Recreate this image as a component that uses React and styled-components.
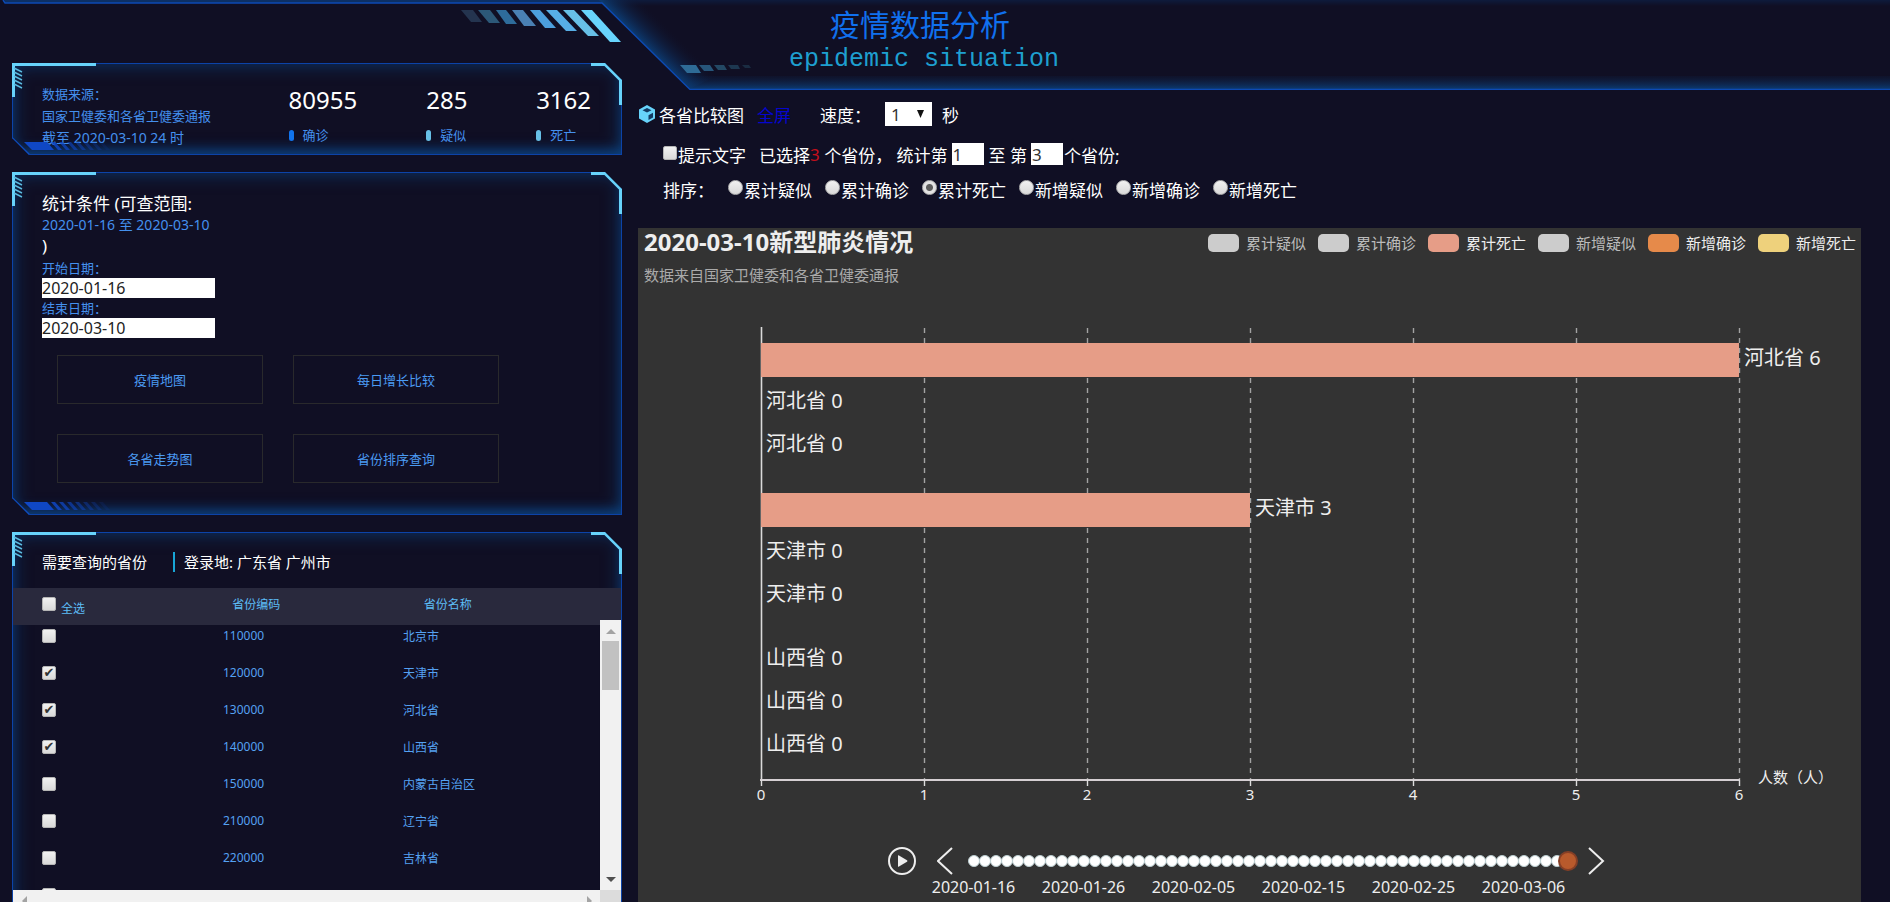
import React, { useState } from "react";
import styled, { createGlobalStyle, css } from "styled-components";

const GlobalStyle = createGlobalStyle`
  * { box-sizing: border-box; }
  body {
    margin: 0;
    background: #100f24;
    color: #fff;
    font-family: "Noto Sans", "Noto Sans CJK SC", sans-serif;
  }
  button, input, select { font-family: inherit; }
`;

const Page = styled.div`
  position: relative;
  display: grid;
  grid-template-columns: minmax(0, 319fr) minmax(0, 626fr);
  height: 100vh;
  overflow: hidden;
`;

const Backdrop = styled.svg`
  position: absolute;
  top: 0;
  left: 0;
  width: 100%;
  height: 90px;
  pointer-events: none;
`;

const Side = styled.aside`
  display: flex;
  flex-direction: column;
  gap: 17px;
  padding: 63px 16px 0 12px;
`;

/* ---------- framed panel ---------- */

const PanelBox = styled.section`
  position: relative;
  flex: none;
  border: 1px solid #0c43a8;
  box-shadow: inset 0 0 18px rgba(10, 82, 150, 0.65), inset 0 -8px 12px -4px rgba(12, 75, 150, 0.6);
  clip-path: polygon(0 0, calc(100% - 17px) 0, 100% 17px, 100% 100%, 17px 100%, 0 calc(100% - 17px));
  padding: ${(p) => p.$pad || "20px 0"};
  min-height: ${(p) => p.$min || "0"};
`;

const Corner = styled.svg`
  position: absolute;
  pointer-events: none;
  ${(p) => p.$at === "tl" && css`top: -1px; left: -1px;`}
  ${(p) => p.$at === "tr" && css`top: -1px; right: -1px;`}
  ${(p) => p.$at === "bl" && css`bottom: -1px; left: -1px;`}
`;

function Panel({ pad, min, children }) {
  return (
    <PanelBox $pad={pad} $min={min}>
      <Corner $at="tl" width="84" height="34" aria-hidden="true">
        <path d="M0 0H84V3H3V34H0Z" fill="#67d3fb" />
        <g stroke="#5bbbe0" strokeWidth="1.5">
          {[5, 9, 13, 17, 21].map((y) => (
            <path key={y} d={`M2 ${y}L10 ${y + 4}`} />
          ))}
        </g>
      </Corner>
      <Corner $at="tr" width="32" height="42" aria-hidden="true">
        <path d="M1 1.5H15L30.5 17V42" fill="none" stroke="#67d3fb" strokeWidth="3" />
      </Corner>
      <Corner $at="bl" width="110" height="18" aria-hidden="true">
        <path d="M0 1L17 17.5" stroke="#0f4cc0" strokeWidth="2" />
        <path d="M12 5H35L42 13H20Z" fill="#0f47c4" />
        {[0, 1, 2, 3, 4, 5, 6].map((i) => (
          <path
            key={i}
            d={`M${39 + i * 8} 5h4l7 8h-4z`}
            fill="#0f47c4"
            opacity={0.85 - i * 0.12}
          />
        ))}
      </Corner>
      {children}
    </PanelBox>
  );
}

/* ---------- totals ---------- */

const Totals = styled.div`
  display: grid;
  grid-template-columns: 247fr 138fr 110fr 85fr;
  padding-left: 29px;
`;

const Source = styled.p`
  margin: 0;
  font-size: 13px;
  line-height: 22px;
  color: #4490ee;
`;

const Until = styled.span`
  display: block;
  font-size: 14px;
`;

const Total = styled.div`
  display: flex;
  flex-direction: column;
`;

const TotalNumber = styled.strong`
  font-size: 24px;
  font-weight: 400;
  line-height: 34px;
`;

const TotalName = styled.span`
  display: flex;
  align-items: center;
  gap: 9px;
  margin-top: 8px;
  font-size: 13px;
  line-height: 20px;
  color: #4490ee;

  &::before {
    content: "";
    width: 5px;
    height: 11px;
    border-radius: 3px;
    background: ${(p) => p.$mark};
  }
`;

/* ---------- query conditions ---------- */

const Conditions = styled.form`
  display: flex;
  flex-direction: column;
  align-items: flex-start;
  padding: 0 29px;
`;

const ConditionText = styled.span`
  font-size: 17px;
  line-height: 24px;
`;

const DateRange = styled.span`
  font-size: 14px;
  line-height: 18px;
  color: #4490ee;
`;

const DateLabel = styled.label`
  font-size: 13px;
  line-height: 20px;
  color: #4490ee;
`;

const DateInput = styled.input`
  width: 173px;
  height: 20px;
  padding: 0;
  border: 0;
  background: #fff;
  color: #222;
  font-size: 16px;
`;

const QueryButtons = styled.div`
  display: grid;
  grid-template-columns: repeat(2, 206px);
  grid-auto-rows: 49px;
  gap: 30px;
  margin: 17px 0 0 15px;
`;

const QueryButton = styled.button`
  border: 1px solid #29292c;
  background: transparent;
  color: #4b9af2;
  font-size: 13px;
`;

/* ---------- provinces ---------- */

const ListHeading = styled.header`
  display: flex;
  padding: 0 29px 16px;
  font-size: 15px;
  line-height: 20px;
`;

const HeadingText = styled.span`
  & + & {
    margin-left: 26px;
    padding-left: 9px;
    border-left: 2px solid #18a5d6;
  }
`;

const Table = styled.table`
  width: 100%;
  table-layout: fixed;
  border-collapse: collapse;
  font-size: 12px;
`;

const HeadRow = styled.tr`
  height: 37px;
  background: #29293d;
  color: #5dbdf6;
`;

const HeadCell = styled.th`
  width: ${(p) => p.$w};
  padding: 0 0 5px ${(p) => (p.$first ? "29px" : "0")};
  font-weight: 400;
  text-align: ${(p) => (p.$first ? "left" : "center")};
`;

const SelectAll = styled.label`
  display: flex;
  align-items: center;
  gap: 5px;

  span { padding-top: 7px; }
`;

const Row = styled.tr`
  height: 37px;
  color: #55a1f2;
`;

const Cell = styled.td`
  width: ${(p) => p.$w};
  padding: 0 0 6px ${(p) => (p.$first ? "29px" : "0")};
`;

const ListArea = styled.div`
  display: grid;
  grid-template-columns: minmax(0, 1fr) 21px;
  grid-template-rows: 270px 21px;
  margin-top: -5px;
`;

const ListView = styled.div`
  overflow: hidden;
`;

const ScrollBar = styled.div`
  display: flex;
  flex-direction: ${(p) => (p.$across ? "row" : "column")};
  align-items: center;
  background: #f1f1f1;
`;

const ScrollArrow = styled.button`
  display: grid;
  place-items: center;
  flex: none;
  width: 21px;
  height: 21px;
  padding: 0;
  border: 0;
  background: transparent;
  margin-top: ${(p) => (p.$end ? "auto" : "0")};
  margin-left: ${(p) => (p.$far ? "auto" : "0")};
`;

const ScrollThumb = styled.div`
  width: 17px;
  height: 49px;
  background: #c1c1c1;
`;

const ScrollCorner = styled.div`
  background: #dcdcdc;
`;

const boxLook = css`
  appearance: none;
  flex: none;
  width: 14px;
  height: 14px;
  margin: 0;
  border: 1px solid #b5b5b5;
  background: linear-gradient(#f1f1f1, #d9d9d9);
`;

const Check = styled.input.attrs({ type: "checkbox" })`
  ${boxLook}
  display: block;
  border-radius: 2px;
  position: relative;

  &:checked::after {
    content: "✔";
    position: absolute;
    inset: 0;
    color: #333;
    font: 13px/12px "DejaVu Sans", sans-serif;
    text-align: center;
  }
`;

const Radio = styled.input.attrs({ type: "radio" })`
  ${boxLook}
  width: 15px;
  height: 15px;
  border-radius: 50%;

  &:checked {
    background: radial-gradient(circle, #5c5c5c 0 3px, #e2e2e2 4px);
  }
`;

/* ---------- main column ---------- */

const Main = styled.main`
  display: flex;
  flex-direction: column;
  padding-right: 29px;
`;

const Title = styled.header`
  display: flex;
  flex-direction: column;
  align-items: center;
  align-self: flex-start;
  height: 90px;
  padding-top: 6px;
  margin-left: 151px;
`;

const TitleText = styled.h1`
  margin: 0 8px 4px 0;
  font-family: "Noto Sans CJK SC", sans-serif;
  font-size: 30px;
  font-weight: 400;
  line-height: 34px;
  color: #1070ee;
`;

const Subtitle = styled.p`
  margin: 0;
  font-family: "Liberation Mono", monospace;
  font-size: 25px;
  line-height: 32px;
  color: #1e9fd0;
`;

const Controls = styled.form`
  display: flex;
  flex-direction: column;
  padding: 12px 0 27px;
  font-size: 17px;
  white-space: pre;
`;

const ControlRow = styled.div`
  display: flex;
  align-items: center;
  height: 24px;
  margin-bottom: ${(p) => p.$after || "0"};
  padding-left: ${(p) => (p.$indent ? "25px" : "1px")};
`;

const ChartName = styled.span`
  margin: 0 13px 0 4px;
`;

const FullScreen = styled.a`
  margin-right: 29px;
  color: #0505cf;
  text-decoration: none;
`;

const SpeedField = styled.label`
  display: flex;
  align-items: center;
  gap: 14px;
`;

const SpeedBox = styled.span`
  position: relative;
  display: flex;

  svg {
    position: absolute;
    top: 8px;
    right: 8px;
    pointer-events: none;
  }
`;

const SpeedSelect = styled.select`
  appearance: none;
  width: 47px;
  height: 24px;
  padding: 0 0 0 6px;
  border: 0;
  background: #fff;
  color: #333;
  font-size: 17px;
`;

const Unit = styled.span`
  margin-left: 10px;
`;

const Option = styled.label`
  display: flex;
  align-items: center;
  gap: 1px;
  margin-right: 13px;

  input { margin-bottom: 3px; }
`;

const Count = styled.span`
  color: #c4101c;
`;

const NumberInput = styled.input`
  width: 32px;
  height: 22px;
  margin: 0 ${(p) => (p.$tight ? "1px" : "5px")} 0 4px;
  padding: 0 0 0 1px;
  border: 0;
  background: #fff;
  color: #333;
  font-size: 17px;
`;

const SortName = styled.span`
  width: 65px;
`;

/* ---------- chart ---------- */

const Chart = styled.section`
  flex: 1 0 auto;
  background: #333;
`;

const ChartHead = styled.header`
  display: flex;
  justify-content: space-between;
  height: 99px;
  padding: 0 5px 0 6px;
`;

const ChartTitle = styled.h2`
  margin: 0;
  font-size: 24px;
  line-height: 28px;
  color: #eee;
`;

const ChartNote = styled.p`
  margin: 8px 0 0;
  font-size: 15px;
  line-height: 22px;
  color: #aaa;
`;

const Legend = styled.div`
  display: flex;
  gap: 12px;
  height: 29px;
  align-items: center;
`;

const LegendItem = styled.button`
  display: flex;
  align-items: center;
  gap: 7px;
  padding: 0;
  border: 0;
  background: none;
  font-size: 15px;
  line-height: 20px;
  white-space: nowrap;
  color: ${(p) => (p.$on ? "#eee" : "#bbb")};

  &::before {
    content: "";
    width: 31px;
    height: 18px;
    border-radius: 5px;
    background: ${(p) => p.$color};
  }
`;

const Plot = styled.svg`
  display: block;
  width: 100%;
`;

const Timeline = styled.div`
  display: flex;
  justify-content: center;
  align-items: flex-start;
  padding: 0 6px 16px 0;
`;

const TimelineButton = styled.button`
  display: flex;
  margin-right: ${(p) => p.$after || "0"};
  padding: 0;
  border: 0;
  background: none;
`;

const Track = styled.div`
  position: relative;
  width: 606px;
  height: 52px;
`;

const Dots = styled.div`
  display: flex;
  align-items: center;
  height: 28px;
`;

const Dot = styled.span`
  flex: none;
  width: 12px;
  height: 12px;
  margin-right: -1px;
  border: 1px solid #bccfd2;
  border-radius: 50%;
  background: #fff;
`;

const Slider = styled.input.attrs({ type: "range" })`
  appearance: none;
  position: absolute;
  top: 0;
  left: -4px;
  width: calc(100% + 8px);
  height: 28px;
  margin: 0;
  background: transparent;

  &::-webkit-slider-thumb {
    appearance: none;
    width: 20px;
    height: 20px;
    border: 2px solid #853f26;
    border-radius: 50%;
    background: #b85a2c;
  }
`;

const Dates = styled.div`
  display: flex;
  margin-left: -49px;
  font-size: 16px;
  line-height: 24px;
  color: #eee;

  span {
    flex: none;
    width: 110px;
    text-align: center;
  }
`;

const PROVINCES = [
  ["110000", "北京市", false],
  ["120000", "天津市", true],
  ["130000", "河北省", true],
  ["140000", "山西省", true],
  ["150000", "内蒙古自治区", false],
  ["210000", "辽宁省", false],
  ["220000", "吉林省", false],
  ["", "", false],
];

const SORTS = ["累计疑似", "累计确诊", "累计死亡", "新增疑似", "新增确诊", "新增死亡"];

const SERIES = [
  ["累计疑似", "#ccc", false],
  ["累计确诊", "#ccc", false],
  ["累计死亡", "#e69d87", true],
  ["新增疑似", "#ccc", false],
  ["新增确诊", "#e68a4a", true],
  ["新增死亡", "#eed17c", true],
];

const GROUPS = [
  ["河北省", [6, 0, 0]],
  ["天津市", [3, 0, 0]],
  ["山西省", [0, 0, 0]],
];

const DATES = ["2020-01-16", "2020-01-26", "2020-02-05", "2020-02-15", "2020-02-25", "2020-03-06"];

const LEFT = 123;
const STEP = 163;
const BASE = 453;

function BarPlot() {
  return (
    <Plot viewBox="0 0 1223 520" role="img" aria-label="各省比较图">
      {[1, 2, 3, 4, 5, 6].map((n) => (
        <path
          key={n}
          d={`M${LEFT + n * STEP + 0.5} 1V${BASE}`}
          stroke="#a3a3a3"
          strokeWidth="1.4"
          strokeDasharray="5 5"
        />
      ))}
      <path d={`M${LEFT + 0.5} 0V${BASE}`} stroke="#dadada" strokeWidth="1.6" />
      {GROUPS.map(([name, values], g) =>
        values.map((value, i) => {
          const y = 16 + g * 150 + i * 43;
          return (
            <g key={name + i}>
              {value > 0 && <rect x={LEFT} y={y} width={value * STEP} height="34" fill="#e69d87" />}
              <text x={LEFT + value * STEP + 5} y={y + 22} fontSize="20" fill="#eee">
                {name} {value}
              </text>
            </g>
          );
        })
      )}
      <path d={`M${LEFT - 1} ${BASE}H${LEFT + 6 * STEP + 1}`} stroke="#d5cfd3" strokeWidth="2" />
      {[0, 1, 2, 3, 4, 5, 6].map((n) => (
        <g key={n}>
          <path d={`M${LEFT + n * STEP + 0.5} ${BASE}v6`} stroke="#ddd" strokeWidth="1.4" />
          <text x={LEFT + n * STEP} y="473" fontSize="15" fill="#eee" textAnchor="middle">
            {n}
          </text>
        </g>
      ))}
      <text x="1120" y="456" fontSize="15" fill="#eee">
        人数（人）
      </text>
    </Plot>
  );
}

function Arrow({ turn = 0, color = "#a3a3a3" }) {
  return (
    <svg width="10" height="10" viewBox="0 0 10 10" aria-hidden="true">
      <path d="M0 8L5 3L10 8Z" fill={color} transform={`rotate(${turn} 5 5)`} />
    </svg>
  );
}

function HeaderBackdrop() {
  return (
    <Backdrop aria-hidden="true">
      <defs>
        <linearGradient id="floor" x1="0" y1="0" x2="0" y2="1">
          <stop offset="0" stopColor="#0e1c3c" stopOpacity="0.3" />
          <stop offset="1" stopColor="#0c3a70" />
        </linearGradient>
        <linearGradient id="slope" gradientUnits="userSpaceOnUse" x1="646" y1="46" x2="666" y2="26">
          <stop offset="0" stopColor="#0c3a70" />
          <stop offset="1" stopColor="#0f1530" stopOpacity="0" />
        </linearGradient>
        <linearGradient id="ceiling" x1="0" y1="0" x2="0" y2="1">
          <stop offset="0" stopColor="#0e1b3c" />
          <stop offset="1" stopColor="#100f24" />
        </linearGradient>
      </defs>
      <rect x="600" width="4000" height="6" fill="url(#ceiling)" />
      <path d="M4 0H600L603 3H5Z" fill="#0d2f63" />
      <path d="M678 76H4000V89H690Z" fill="url(#floor)" />
      <path d="M599 0H640L716 76L690 89Z" fill="url(#slope)" />
      <path d="M3 0L5 3H602L690 89.5H4000" fill="none" stroke="#0c4ab4" strokeWidth="1.4" />
      <path d="M581 10h11l29 32h-11z" fill="#68d5fd" />
      <path d="M563 10h11l25 26h-11z" fill="#67bfe6" />
      <path d="M546 10h11l20 21h-11z" fill="#57aee6" />
      <path d="M530 10h10l16 18h-11z" fill="#4c9fdd" />
      <path d="M512 10h11l13 16h-12z" fill="#4a80b3" />
      <path d="M496 10h10l11 14h-11z" fill="#2e6c9b" />
      <path d="M478 10h12l10 13h-11z" fill="#2c5878" />
      <path d="M461 10h12l9 12h-11z" fill="#24344f" />
      <path d="M680 65h16l5 8h-14z" fill="#2e6b96" />
      <path d="M699 65h11l4 6h-10z" fill="#27557a" />
      <path d="M714 65h10l3 5h-9z" fill="#234864" />
      <path d="M728 65h10l2 4h-9z" fill="#1d3750" />
      <path d="M742 65h7l2 3h-6z" fill="#1a2c42" />
    </Backdrop>
  );
}

export default function App() {
  const [picked, setPicked] = useState(() => PROVINCES.map((p) => p[2]));
  const [sort, setSort] = useState("累计死亡");
  const toggle = (i) => setPicked(picked.map((on, n) => (n === i ? !on : on)));

  return (
    <>
      <GlobalStyle />
      <Page>
        <HeaderBackdrop />
        <Side>
          <Panel pad="19px 0 0" min="92px">
            <Totals>
              <Source>
                数据来源：
                <br />
                国家卫健委和各省卫健委通报
                <Until>截至 2020-03-10 24 时</Until>
              </Source>
              <Total>
                <TotalNumber>80955</TotalNumber>
                <TotalName $mark="#1173ec">确诊</TotalName>
              </Total>
              <Total>
                <TotalNumber>285</TotalNumber>
                <TotalName $mark="#67bfe6">疑似</TotalName>
              </Total>
              <Total>
                <TotalNumber>3162</TotalNumber>
                <TotalName $mark="#67bfe6">死亡</TotalName>
              </Total>
            </Totals>
          </Panel>

          <Panel pad="19px 0 31px">
            <Conditions>
              <ConditionText>统计条件 (可查范围:</ConditionText>
              <DateRange>2020-01-16 至 2020-03-10</DateRange>
              <ConditionText>)</ConditionText>
              <DateLabel htmlFor="start">开始日期：</DateLabel>
              <DateInput id="start" defaultValue="2020-01-16" />
              <DateLabel htmlFor="end">结束日期：</DateLabel>
              <DateInput id="end" defaultValue="2020-03-10" />
              <QueryButtons>
                <QueryButton type="button">疫情地图</QueryButton>
                <QueryButton type="button">每日增长比较</QueryButton>
                <QueryButton type="button">各省走势图</QueryButton>
                <QueryButton type="button">省份排序查询</QueryButton>
              </QueryButtons>
            </Conditions>
          </Panel>

          <Panel pad="19px 0 24px">
            <ListHeading>
              <HeadingText>需要查询的省份</HeadingText>
              <HeadingText>登录地: 广东省 广州市</HeadingText>
            </ListHeading>
            <Table>
              <thead>
                <HeadRow>
                  <HeadCell $first $w="24%">
                    <SelectAll>
                      <Check />
                      <span>全选</span>
                    </SelectAll>
                  </HeadCell>
                  <HeadCell $w="32%">省份编码</HeadCell>
                  <HeadCell $w="31%">省份名称</HeadCell>
                  <HeadCell />
                </HeadRow>
              </thead>
            </Table>
            <ListArea>
              <ListView>
                <Table>
                  <tbody>
                    {PROVINCES.map(([code, name], i) => (
                      <Row key={i}>
                        <Cell $first $w="210px">
                          <Check
                            aria-label={name || "省份"}
                            checked={picked[i]}
                            onChange={() => toggle(i)}
                          />
                        </Cell>
                        <Cell $w="180px">{code}</Cell>
                        <Cell>{name}</Cell>
                      </Row>
                    ))}
                  </tbody>
                </Table>
              </ListView>
              <ScrollBar>
                <ScrollArrow aria-label="向上">
                  <Arrow />
                </ScrollArrow>
                <ScrollThumb />
                <ScrollArrow $end aria-label="向下">
                  <Arrow turn={180} color="#505050" />
                </ScrollArrow>
              </ScrollBar>
              <ScrollBar $across>
                <ScrollArrow aria-label="向左">
                  <Arrow turn={-90} />
                </ScrollArrow>
                <ScrollArrow $far aria-label="向右">
                  <Arrow turn={90} />
                </ScrollArrow>
              </ScrollBar>
              <ScrollCorner />
            </ListArea>
          </Panel>
        </Side>

        <Main>
          <Title>
            <TitleText>疫情数据分析</TitleText>
            <Subtitle>epidemic situation</Subtitle>
          </Title>

          <Controls>
            <ControlRow $after="16px">
              <svg width="16" height="18" viewBox="0 0 16 18" aria-hidden="true">
                <path d="M8 0L16 4.5V13.5L8 18L0 13.5V4.5Z" fill="#67d3fb" />
                <path d="M8 3L12.5 5.3L8 7.6L3.5 5.3Z" fill="#123a63" />
                <path d="M9.5 10.2L14 7.8V12.4L9.5 15Z" fill="#123a63" />
              </svg>
              <ChartName>各省比较图</ChartName>
              <FullScreen href="#full">全屏</FullScreen>
              <SpeedField>
                速度：
                <SpeedBox>
                  <SpeedSelect defaultValue="1">
                    <option>1</option>
                    <option>2</option>
                    <option>3</option>
                  </SpeedSelect>
                  <svg width="7" height="8" viewBox="0 0 7 8" aria-hidden="true">
                    <path d="M0 0H7L3.5 8Z" fill="#111" />
                  </svg>
                </SpeedBox>
              </SpeedField>
              <Unit>秒</Unit>
            </ControlRow>
            <ControlRow $indent $after="11px">
              <Option>
                <Check />
                提示文字
              </Option>
              已选择<Count>3</Count>
              <span> 个省份， 统计第</span>
              <NumberInput aria-label="起始名次" defaultValue="1" />
              <span>至 第</span>
              <NumberInput $tight aria-label="结束名次" defaultValue="3" />
              <span>个省份;</span>
            </ControlRow>
            <ControlRow $indent>
              <SortName>排序：</SortName>
              {SORTS.map((name) => (
                <Option key={name}>
                  <Radio name="sort" checked={sort === name} onChange={() => setSort(name)} />
                  {name}
                </Option>
              ))}
            </ControlRow>
          </Controls>

          <Chart>
            <ChartHead>
              <div>
                <ChartTitle>2020-03-10新型肺炎情况</ChartTitle>
                <ChartNote>数据来自国家卫健委和各省卫健委通报</ChartNote>
              </div>
              <Legend>
                {SERIES.map(([name, color, on]) => (
                  <LegendItem key={name} type="button" $color={color} $on={on}>
                    {name}
                  </LegendItem>
                ))}
              </Legend>
            </ChartHead>
            <BarPlot />
            <Timeline>
              <TimelineButton $after="21px" aria-label="播放">
                <svg width="28" height="28" viewBox="0 0 28 28" aria-hidden="true">
                  <circle cx="14" cy="14" r="13" fill="none" stroke="#eee" strokeWidth="2" />
                  <path d="M10 8.5Q10 8 11 8.5L19 13.3Q20 14 19 14.7L11 19.5Q10 20 10 19.5Z" fill="#eee" />
                </svg>
              </TimelineButton>
              <TimelineButton $after="15px" aria-label="上一天">
                <svg width="16" height="28" viewBox="0 0 16 28" aria-hidden="true">
                  <path d="M15 1L1 14L15 27" fill="none" stroke="#eee" strokeWidth="2" />
                </svg>
              </TimelineButton>
              <Track>
                <Dots>
                  {Array.from({ length: 55 }, (_, i) => (
                    <Dot key={i} />
                  ))}
                </Dots>
                <Slider aria-label="日期" min="0" max="54" defaultValue="54" />
                <Dates>
                  {DATES.map((d) => (
                    <span key={d}>{d}</span>
                  ))}
                </Dates>
              </Track>
              <TimelineButton aria-label="下一天">
                <svg width="32" height="28" viewBox="0 0 32 28" aria-hidden="true">
                  <path d="M15 1L29 14L15 27" fill="none" stroke="#eee" strokeWidth="2" />
                </svg>
              </TimelineButton>
            </Timeline>
          </Chart>
        </Main>
      </Page>
    </>
  );
}
